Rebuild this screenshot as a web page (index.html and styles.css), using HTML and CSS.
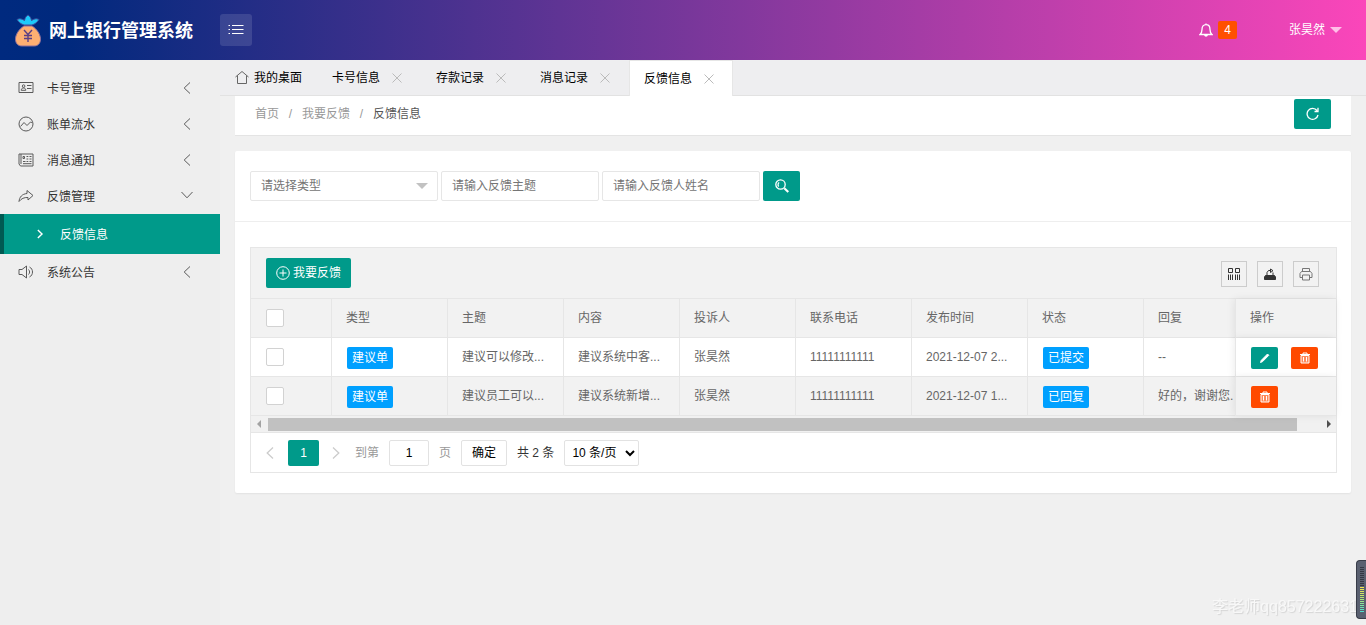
FILE: index.html
```html
<!DOCTYPE html>
<html lang="zh-CN">
<head>
<meta charset="utf-8">
<title>网上银行管理系统</title>
<link rel="stylesheet" href="styles.css">
</head>
<body>
<svg class="defs" aria-hidden="true">
  <symbol id="left" viewBox="0 0 14 14"><path d="M10 1.500 4.200 7l5.800 5.500"/></symbol>
  <symbol id="right" viewBox="0 0 14 14"><path d="M4 1.500 9.800 7 4 12.500"/></symbol>
  <symbol id="down" viewBox="0 0 14 14"><path d="M1.500 3 7 8.800 12.500 3"/></symbol>
  <symbol id="close" viewBox="0 0 14 14"><path d="m2.500 2.500 9 9m0-9-9 9"/></symbol>
  <symbol id="trash" viewBox="0 0 12 12"><path d="M1 2.500h10M4 2.500V1h4v1.500"/><path d="M2 3.500h8v7.500H2z" fill="currentColor" fill-opacity=".35"/><path d="M4.500 5v4.500M7.500 5v4.500"/></symbol>
</svg>
<header class="header">
  <div class="brand">
    <svg class="logo" viewBox="0 0 28 34">
      <path d="M3 5.500c3-1.500 5-.5 7.500 1C11 4 12 2 14 1c2 1 3 3 3.500 5.500 2.500-1.500 4.500-2.500 7.500-1-2 3-4 4.500-7 5.500h-8C7 10 5 8.500 3 5.500Z" fill="#1ccbfb" stroke="#3c4a9c"/>
      <path d="M10 12h8c5 3 9 9 8.500 14-.4 4-3 6-6.500 6H8c-3.500 0-6.100-2-6.500-6C1 21 5 15 10 12Z" fill="#fdaf72" stroke="#8a6d9b"/>
      <path d="m10 16 4 4.500 4-4.500M14 20.500V28M10 21.500h8M10 24.500h8" fill="none" stroke="#5a3f86" stroke-width="1.400"/>
    </svg>
    <h1 class="title">网上银行管理系统</h1>
  </div>
  <button class="menu-btn" type="button" aria-label="菜单">
    <svg class="icon i16" viewBox="0 0 16 16"><path d="M4 3.500h11.500M4 7.500h11.500M4 11.500h11.500M.5 3.500H2M.5 7.500H2M.5 11.500H2"/></svg>
  </button>
  <div class="user-area">
    <a class="bell" href="#" aria-label="通知">
      <svg class="icon i14 bold" viewBox="0 0 14 14"><path d="M1 11.500h12c-1.500-1-2-2.500-2-5C11 3.500 9.500 1.700 7 1.700S3 3.500 3 6.500c0 2.500-.5 4-2 5ZM5.700 12c.3 1.300 2.300 1.300 2.600 0M7 .5v1.200"/></svg>
      <span class="count">4</span>
    </a>
    <a class="user" href="#">张昊然<span class="caret"></span></a>
  </div>
</header>
<div class="layout">
  <nav class="side">
    <a class="item" href="#"><svg class="icon i16" viewBox="0 0 16 16"><path d="M1 2.500h14v10H1zM3.200 10.300C3.400 8.500 4.200 8 5.500 8s2.100.5 2.300 2.300zM4.300 6.100a1.300 1.300 0 1 0 2.600 0 1.300 1.300 0 1 0-2.600 0M9 5.500h4.500M9 8.500h4.500"/></svg><span>卡号管理</span><svg class="icon i14 arrow"><use href="#left"/></svg></a>
    <a class="item" href="#"><svg class="icon i16" viewBox="0 0 16 16"><circle cx="8" cy="8" r="7"/><path d="m2.500 10.500 3.500-4 3 3 3.500-3.500 1.500.5"/></svg><span>账单流水</span><svg class="icon i14 arrow"><use href="#left"/></svg></a>
    <a class="item" href="#"><svg class="icon i16" viewBox="0 0 16 16"><path d="M3 2h12v12H2.500L1 12V2h2v10M5 4.500h1.500v2H5zM8.500 4.500h1.800M11.500 4.500h2M8.500 7h1.800M11.500 7h2M5 9.500h2.500M8.500 9.500h1.800M11.500 9.500h2M5 11.700h8.500"/></svg><span>消息通知</span><svg class="icon i14 arrow"><use href="#left"/></svg></a>
    <a class="item" href="#"><svg class="icon i16" viewBox="0 0 16 16"><path d="M9 2.500 15 7.500l-5 4.500V9.500C6 9.300 3.500 10.500 1 13.500c.5-4.500 3-7.500 8-8z"/></svg><span>反馈管理</span><svg class="icon i14 arrow"><use href="#down"/></svg></a>
    <a class="sub" href="#"><svg class="icon i10"><use href="#right"/></svg><span>反馈信息</span></a>
    <a class="item" href="#"><svg class="icon i16" viewBox="0 0 16 16"><path d="M1 5.500h3L8.500 2v12L4 10.500H1zM10.500 5.500c1.500 1.500 1.500 3.500 0 5M11.500 3c4 2 4 8 0 10"/></svg><span>系统公告</span><svg class="icon i14 arrow"><use href="#left"/></svg></a>
  </nav>
  <main class="main">
    <div class="tabs">
      <a class="tab home" href="#"><svg class="icon i14" viewBox="0 0 14 14"><path d="M.5 6 7 .5 13.500 6M2.500 4.500v8h9v-8"/></svg>我的桌面</a>
      <a class="tab" href="#">卡号信息<svg class="icon i14 x"><use href="#close"/></svg></a>
      <a class="tab" href="#">存款记录<svg class="icon i14 x"><use href="#close"/></svg></a>
      <a class="tab" href="#">消息记录<svg class="icon i14 x"><use href="#close"/></svg></a>
      <a class="tab active" href="#">反馈信息<svg class="icon i14 x"><use href="#close"/></svg></a>
    </div>
    <div class="crumbs">
      <a href="#">首页</a><span class="sep">/</span><a href="#">我要反馈</a><span class="sep">/</span><span class="here">反馈信息</span>
      <button class="btn square refresh" type="button" aria-label="刷新"><svg class="icon i14 bold" viewBox="0 0 14 14"><path d="M12 8A5.500 5.500 0 1 1 11 3.500M12 .8v3.700H8.500"/></svg></button>
    </div>
    <section class="card">
      <form class="search">
        <div class="pick"><select class="field" aria-label="类型"><option>请选择类型</option></select></div>
        <input class="field" type="text" placeholder="请输入反馈主题" aria-label="反馈主题">
        <input class="field" type="text" placeholder="请输入反馈人姓名" aria-label="反馈人姓名">
        <button class="btn square" type="button" aria-label="搜索"><svg class="icon i14 bold" viewBox="0 0 14 14"><circle cx="5.500" cy="5.500" r="4.700"/><path d="M3.700 7.500a2.700 2.700 0 0 1 .5-4"/><path d="m9.300 9.300 4 3.700" stroke-width="2.200"/></svg></button>
      </form>
      <div class="body">
        <div class="grid">
          <div class="toolbar">
            <button class="btn add" type="button"><svg class="icon i14" viewBox="0 0 14 14"><circle cx="7" cy="7" r="6.300"/><path d="M7 3.500v7M3.500 7h7"/></svg>我要反馈</button>
            <div class="tools">
              <button class="tool" type="button" aria-label="筛选列"><svg class="icon i14" viewBox="0 0 14 14"><path d="M1.500 1.500h4v4h-4zM8.500 1.500h4v4h-4zM1.500 7.500V13M3.500 7.500V13M5.500 7.500V13M8.500 7.500V13M10.500 7.500V13M12.500 7.500V13"/></svg></button>
              <button class="tool" type="button" aria-label="导出"><svg class="icon i14 dark" viewBox="0 0 14 14"><path d="M2.500 8.500h9l1 1.500v2.500h-11V10z" fill="currentColor"/><path d="M4 8V5.500l1.500-2H8M7.500 2l2.500 1.700L7.500 5.500zM10 5.500V8" /></svg></button>
              <button class="tool" type="button" aria-label="打印"><svg class="icon i14 soft" viewBox="0 0 14 14"><path d="M3.500 4.500v-3h7v3M3 10.500H1v-4l1.500-2h9l1.500 2v4h-2M3.500 8h7v5h-7z"/></svg></button>
            </div>
          </div>
          <table class="table">
            <colgroup><col class="c-check"><col class="c"><col class="c"><col class="c"><col class="c"><col class="c"><col class="c"><col class="c"><col><col class="c-ops"></colgroup>
            <thead>
              <tr><th><input class="check" type="checkbox" aria-label="全选"></th><th>类型</th><th>主题</th><th>内容</th><th>投诉人</th><th>联系电话</th><th>发布时间</th><th>状态</th><th class="reply">回复</th><th class="ops">操作</th></tr>
            </thead>
            <tbody>
              <tr><td><input class="check" type="checkbox" aria-label="选择第1行"></td><td><span class="tag">建议单</span></td><td>建议可以修改...</td><td>建议系统中客...</td><td>张昊然</td><td>11111111111</td><td>2021-12-07 2...</td><td><span class="tag">已提交</span></td><td class="reply">--</td>
                <td class="ops"><div class="acts"><button class="act" type="button" aria-label="编辑"><svg class="icon i12" viewBox="0 0 12 12"><path d="m1.500 10.500.8-2.200 6.200-6.300 1.300 1.300-6.200 6.300z" fill="currentColor"/></svg></button><button class="act del" type="button" aria-label="删除"><svg class="icon i12"><use href="#trash"/></svg></button></div></td></tr>
              <tr><td><input class="check" type="checkbox" aria-label="选择第2行"></td><td><span class="tag">建议单</span></td><td>建议员工可以...</td><td>建议系统新增...</td><td>张昊然</td><td>11111111111</td><td>2021-12-07 1...</td><td><span class="tag">已回复</span></td><td class="reply">好的，谢谢您.</td>
                <td class="ops"><div class="acts"><button class="act del" type="button" aria-label="删除"><svg class="icon i12"><use href="#trash"/></svg></button></div></td></tr>
            </tbody>
          </table>
          <div class="scroll"><span class="end prev"></span><span class="thumb"></span><span class="end next"></span></div>
          <div class="pager">
            <button class="step" type="button" aria-label="上一页"><svg class="icon i14 bold"><use href="#left"/></svg></button>
            <button class="page" type="button">1</button>
            <button class="step" type="button" aria-label="下一页"><svg class="icon i14 bold"><use href="#right"/></svg></button>
            <label class="goto">到第<input class="num" type="text" value="1">页</label>
            <button class="go" type="button">确定</button>
            <span class="total">共 2 条</span>
            <select class="size" aria-label="每页条数"><option>10 条/页</option></select>
          </div>
        </div>
      </div>
    </section>
  </main>
</div>
<div class="watermark">李老师qq857222631</div>
<div class="meter"><span class="bars off"></span><span class="bars on"></span></div>
</body>
</html>
```
FILE: styles.css
```css
* { box-sizing: border-box; }
body {
  margin: 0;
  min-height: 100vh;
  display: flex;
  flex-direction: column;
  overflow: hidden;
  background: #f0f0f0;
  color: #333;
  font: 12px/20px "Liberation Sans", "Noto Sans CJK SC", sans-serif;
}
a { color: inherit; text-decoration: none; }
button, input, select { font: inherit; color: inherit; margin: 0; }
button { padding: 0; border: 0; cursor: pointer; }
.defs { position: absolute; width: 0; height: 0; }
.icon { display: block; flex: none; fill: none; stroke: currentColor; stroke-width: 1; }
.i10 { width: 10px; height: 10px; stroke-width: 2; }
.i12 { width: 12px; height: 12px; }
.i14 { width: 14px; height: 14px; }
.i16 { width: 16px; height: 16px; }
.bold { stroke-width: 1.3; }
.soft { color: #777; }
.dark { color: #333; }

.header {
  display: flex;
  align-items: center;
  height: 60px;
  background: linear-gradient(to right, #002a7f, #00297d 5%, #fb46ba);
  color: #fff;
}
.brand { display: flex; align-items: center; gap: 7px; width: 220px; padding: 2px 0 0 14px; }
.logo { width: 28px; height: 34px; }
.title { margin: 0; font-size: 18px; line-height: 26px; }
.menu-btn {
  display: grid;
  place-items: center;
  width: 32px;
  height: 32px;
  border-radius: 3px;
  background: rgba(255, 255, 255, .12);
  color: #fff;
}
.user-area { display: flex; align-items: center; gap: 52px; margin-left: auto; padding-right: 24px; }
.bell { display: flex; align-items: center; gap: 5px; }
.count {
  width: 19px;
  border-radius: 2px;
  background: #ff5000;
  line-height: 18px;
  text-align: center;
}
.user { display: flex; align-items: center; gap: 5px; }
.caret { border: 6px solid transparent; border-top-color: #ffc0e8; border-bottom: 0; }

.layout { display: flex; flex: 1; }
.side { flex: none; width: 220px; padding-top: 10px; background: #eee; }
.item { display: flex; align-items: center; gap: 13px; height: 36px; padding: 0 26px 0 18px; }
.item span, .sub span { padding-top: 2px; }
.item .icon { color: #5a5a5a; }
.item .arrow { margin-left: auto; }
.sub {
  display: flex;
  align-items: center;
  gap: 15px;
  height: 40px;
  padding-left: 31px;
  border-left: 4px solid #005a52;
  background: #009a8a;
  color: #fff;
}

.main { flex: 1; min-width: 0; }
.tabs { display: flex; height: 36px; border-bottom: 1px solid #e2e2e2; background: #eeeef0; }
.tab {
  display: flex;
  align-items: center;
  gap: 10px;
  width: 104px;
  height: 36px;
  padding-left: 15px;
  color: #000;
}
.tab.home { gap: 5px; width: 97px; }
.tab.home .icon { color: #666; }
.tab.active { padding-left: 14px; border: 1px solid #e6e6e6; border-bottom: 0; background: #fff; }
.x { color: #bbb; }
.crumbs {
  display: flex;
  align-items: center;
  height: 40px;
  margin: 0 15px;
  padding: 0 20px 3px;
  border-bottom: 1px solid #e4e4e4;
  background: #fff;
  color: #999;
}
.sep { width: 23px; text-align: center; }
.here { color: #555; }
.btn {
  display: flex;
  align-items: center;
  justify-content: center;
  height: 30px;
  border-radius: 2px;
  background: #009a8a;
  color: #fff;
}
.square { width: 37px; }
.refresh { margin-left: auto; }

.card { margin: 15px; border-radius: 2px; background: #fff; box-shadow: 0 1px 2px rgba(0, 0, 0, .06); }
.search { display: flex; gap: 3px; padding: 20px 15px; border-bottom: 1px solid #eee; }
.field {
  width: 158px;
  height: 30px;
  padding: 0 10px;
  border: 1px solid #e6e6e6;
  border-radius: 2px;
  background: #fff;
  color: #757575;
}
.field::placeholder { color: #757575; }
.pick { position: relative; width: 188px; }
.pick .field { display: block; width: 100%; appearance: none; }
.pick::after {
  content: "";
  position: absolute;
  top: 12px;
  right: 10px;
  border: 6px solid transparent;
  border-top-color: #c2c2c2;
  border-bottom: 0;
  pointer-events: none;
}
.body { padding: 25px 14px 20px 15px; }
.grid { border: 1px solid #e6e6e6; }
.toolbar {
  display: flex;
  align-items: center;
  justify-content: space-between;
  height: 51px;
  padding: 0 17px 0 15px;
  border-bottom: 1px solid #e6e6e6;
  background: #f2f2f2;
}
.add { gap: 3px; width: 85px; }
.tools { display: flex; gap: 10px; padding-top: 1px; }
.tool {
  display: grid;
  place-items: center;
  width: 26px;
  height: 26px;
  border: 1px solid #ccc;
  background: none;
}

.table { width: 100%; table-layout: fixed; border-spacing: 0; color: #666; }
.c { width: 116px; }
.c-check { width: 81px; }
.c-ops { width: 101px; }
th, td {
  height: 39px;
  padding: 0 14px;
  border: solid #e6e6e6;
  border-width: 0 1px 1px 0;
  overflow: hidden;
  font-weight: 400;
  text-align: left;
  white-space: nowrap;
}
th, tbody tr:nth-child(even) td { background: #f2f2f2; }
tbody tr:nth-child(odd) td { background: #fff; }
.reply { padding-right: 0; border-right: 0; }
.ops {
  position: relative;
  border-width: 0 0 1px 1px;
  box-shadow: -1px 0 8px rgba(0, 0, 0, .08);
}
.check {
  display: block;
  appearance: none;
  width: 18px;
  height: 18px;
  margin-left: 1px;
  border: 1px solid #d2d2d2;
  border-radius: 2px;
  background: #fff;
}
.tag {
  display: inline-block;
  width: 46px;
  margin: 1px 0 0 1px;
  border-radius: 2px;
  background: #00a0ff;
  color: #fff;
  line-height: 22px;
  text-align: center;
}
.acts { display: flex; gap: 13px; padding: 1px 0 0 1px; }
.act {
  display: grid;
  place-items: center;
  width: 27px;
  height: 22px;
  border-radius: 2px;
  background: #009a8a;
  color: #fff;
}
.del { background: #ff4a00; }

.scroll {
  display: flex;
  align-items: center;
  height: 17px;
  padding: 0 5px 0 6px;
  border-bottom: 1px solid #e6e6e6;
  background: #f1f1f1;
}
.thumb { flex: 1; height: 13px; margin: 0 30px 0 7px; background: #c1c1c1; }
.end { border: 4px solid transparent; }
.prev { border-left: 0; border-right-color: #a3a3a3; }
.next { border-right: 0; border-left-color: #505050; }

.pager { display: flex; align-items: center; gap: 10px; height: 39px; padding: 0 12px; }
.step { background: none; color: #ccc; }
.page { width: 31px; height: 26px; margin-left: 1px; border-radius: 2px; background: #009a8a; color: #fff; }
.goto { display: flex; align-items: center; gap: 10px; margin-left: 2px; color: #999; }
.num, .go, .size { height: 26px; border: 1px solid #e2e2e2; border-radius: 2px; background: #fff; color: #000; }
.num { width: 40px; padding: 0; text-align: center; }
.go { width: 46px; }
.size { width: 75px; padding: 0 3px; }

.watermark {
  position: fixed;
  right: 8px;
  bottom: 7px;
  color: #f8f8f8;
  font-size: 16px;
  line-height: 22px;
  white-space: nowrap;
  text-shadow: 1px 1px 1px #d4d4d4;
}
.meter {
  position: fixed;
  right: 0;
  bottom: 6px;
  width: 10px;
  height: 59px;
  padding: 6px 2px 6px 3px;
  border: 1px solid #383c48;
  border-right: 0;
  border-radius: 4px 0 0 4px;
  background: #5a6070;
}
.bars { display: block; }
.off { height: 20px; background: repeating-linear-gradient(#343843 0 1px, #5a6070 1px 2px); }
.on { height: 25px; background: repeating-linear-gradient(transparent 0 1px, #5a6070 1px 2px), linear-gradient(#f3e64b, #a8e67a, #4de0d0); }
```
